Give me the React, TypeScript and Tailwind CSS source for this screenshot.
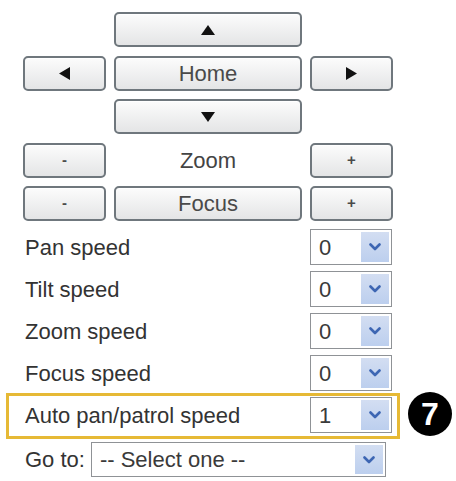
import React from "react";

function Tri({ dir }: { dir: "up" | "down" | "left" | "right" }) {
  const pts: Record<string, string> = {
    up: "7,0 14,10 0,10",
    down: "0,0 14,0 7,10",
    left: "0,6.5 11,0 11,13",
    right: "0,0 11,6.5 0,13",
  };
  const vertical = dir === "up" || dir === "down";
  return (
    <svg
      width={vertical ? 14 : 11}
      height={vertical ? 10 : 13}
      viewBox={vertical ? "0 0 14 10" : "0 0 11 13"}
    >
      <polygon points={pts[dir]} fill="#111" />
    </svg>
  );
}

function Btn({ children, small }: { children: React.ReactNode; small?: boolean }) {
  return (
    <button
      className={`flex items-center justify-center rounded-[5px] border-2 border-[#6f777d] bg-gradient-to-b from-[#fcfcfc] to-[#e4e5e6] text-[#4a4a4a] shadow-[inset_0_1px_0_#ffffff] ${
        small ? "text-[15px] font-bold" : "text-[22px]"
      }`}
    >
      {children}
    </button>
  );
}

function Chevron() {
  return (
    <svg width="12" height="8" viewBox="0 0 12 8">
      <path d="M1.5 1.5 L6 6 L10.5 1.5" fill="none" stroke="#3d66b3" strokeWidth="2.6" strokeLinecap="round" strokeLinejoin="round" />
    </svg>
  );
}

function Select({ value, wide }: { value: string; wide?: boolean }) {
  return (
    <div
      className={`flex h-full items-stretch border border-[#8f9296] bg-white p-[2px] ${
        wide ? "w-[295px]" : "w-[82px]"
      }`}
    >
      <div className="flex flex-1 items-center pl-[6px] text-[22px] text-[#3a3a3a]">{value}</div>
      <div className="flex w-[28px] items-center justify-center bg-gradient-to-b from-[#d3def2] to-[#bccfee]">
        <Chevron />
      </div>
    </div>
  );
}

const speeds = [
  { label: "Pan speed", value: "0" },
  { label: "Tilt speed", value: "0" },
  { label: "Zoom speed", value: "0" },
  { label: "Focus speed", value: "0" },
];

export default function App() {
  return (
    <div className="h-[481px] w-[456px] overflow-hidden bg-white font-['Liberation_Sans',Arial,sans-serif] text-[#333]">
      {/* Pan / tilt / zoom / focus buttons */}
      <div className="grid auto-rows-[35px] grid-cols-[83px_188px_83px] gap-x-2 gap-y-[8.5px] pl-[23px] pt-[12px]">
        <div />
        <Btn>
          <Tri dir="up" />
        </Btn>
        <div />
        <Btn>
          <Tri dir="left" />
        </Btn>
        <Btn>Home</Btn>
        <Btn>
          <Tri dir="right" />
        </Btn>
        <div />
        <Btn>
          <Tri dir="down" />
        </Btn>
        <div />
        <Btn small>-</Btn>
        <div className="flex items-center justify-center text-[22px] text-[#444]">Zoom</div>
        <Btn small>+</Btn>
        <Btn small>-</Btn>
        <Btn>Focus</Btn>
        <Btn small>+</Btn>
      </div>

      {/* Speed settings */}
      <div className="mt-2 flex flex-col gap-[6px] text-[22px]">
        {speeds.map((s) => (
          <div key={s.label} className="flex h-[36px] w-[392px] items-center justify-between pl-[25px]">
            <span>{s.label}</span>
            <Select value={s.value} />
          </div>
        ))}
        <div className="relative flex h-[36px] w-[392px] items-center justify-between pl-[25px]">
          <span>Auto pan/patrol speed</span>
          <Select value="1" />
          <div className="pointer-events-none absolute left-[6px] top-[-4px] h-[46px] w-[394px] border-[3px] border-[#e6b935]" />
          <div className="absolute left-[408px] top-[-5px] flex h-[44px] w-[44px] items-center justify-center rounded-full bg-black text-[32px] font-bold text-white">
            7
          </div>
        </div>
        <div className="mt-[3px] flex h-[35px] items-center pl-[25px]">
          <span className="mr-[6px]">Go to:</span>
          <Select value="-- Select one --" wide />
        </div>
      </div>
    </div>
  );
}
